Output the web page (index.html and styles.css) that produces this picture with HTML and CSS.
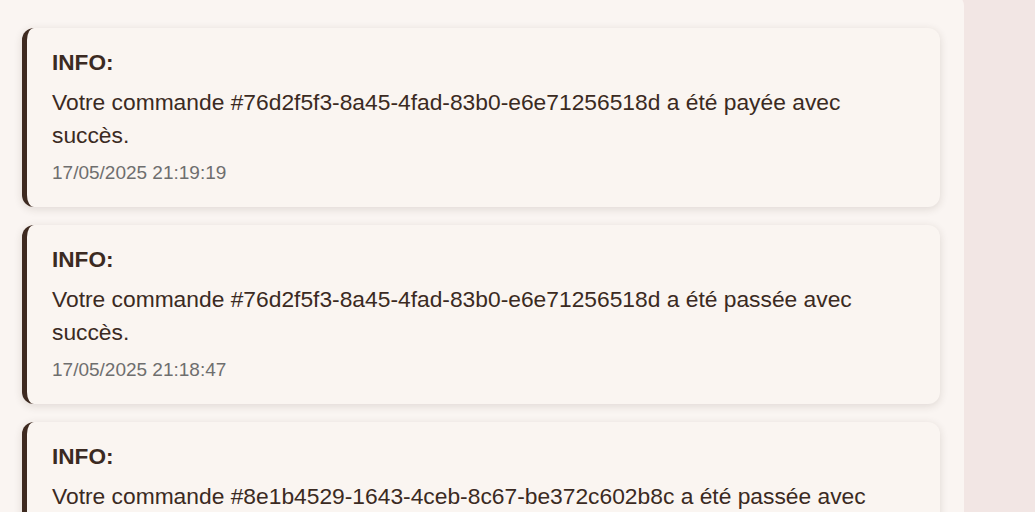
FILE: index.html
```html
<!DOCTYPE html>
<html lang="fr">
<head>
<meta charset="utf-8">
<title>Notifications</title>
<link rel="stylesheet" href="styles.css">
</head>
<body>
<main class="panel">
  <section class="list">
    <article class="card">
      <h3 class="title">INFO:</h3>
      <p class="msg">Votre commande #76d2f5f3-8a45-4fad-83b0-e6e71256518d a été payée avec succès.</p>
      <time class="time">17/05/2025 21:19:19</time>
    </article>
    <article class="card">
      <h3 class="title">INFO:</h3>
      <p class="msg">Votre commande #76d2f5f3-8a45-4fad-83b0-e6e71256518d a été passée avec succès.</p>
      <time class="time">17/05/2025 21:18:47</time>
    </article>
    <article class="card">
      <h3 class="title">INFO:</h3>
      <p class="msg">Votre commande #8e1b4529-1643-4ceb-8c67-be372c602b8c a été passée avec succès.</p>
      <time class="time">17/05/2025 21:10:02</time>
    </article>
  </section>
</main>
</body>
</html>
```

FILE: styles.css
```css
html, body {
  margin: 0;
  padding: 0;
  background: #f2e6e4;
  height: 100%;
  overflow: hidden;
}
body {
  font-family: "Liberation Sans", Arial, sans-serif;
  color: #3b2a22;
}
.panel {
  width: 964px;
  box-sizing: border-box;
  margin-top: -6px;
  padding: 34px 24px 40px 22px;
  background: #faf5f2;
  border-radius: 0 12px 12px 0;
  min-height: 700px;
}
.list {
  display: flex;
  flex-direction: column;
  gap: 18px;
}
.card {
  background: #faf5f1;
  border-left: 5px solid #3e2a20;
  border-radius: 12px;
  box-shadow: 0 2px 8px rgba(60, 40, 30, 0.14);
  padding: 18px 25px 21px 25px;
  display: flex;
  flex-direction: column;
}
.title {
  margin: 0 0 7px;
  font-size: 22.6px;
  line-height: 33px;
  font-weight: 700;
}
.msg {
  margin: 0 0 8px;
  font-size: 22.8px;
  line-height: 33px;
}
.time {
  font-size: 19px;
  line-height: 26px;
  color: #6e6e6e;
}
```
